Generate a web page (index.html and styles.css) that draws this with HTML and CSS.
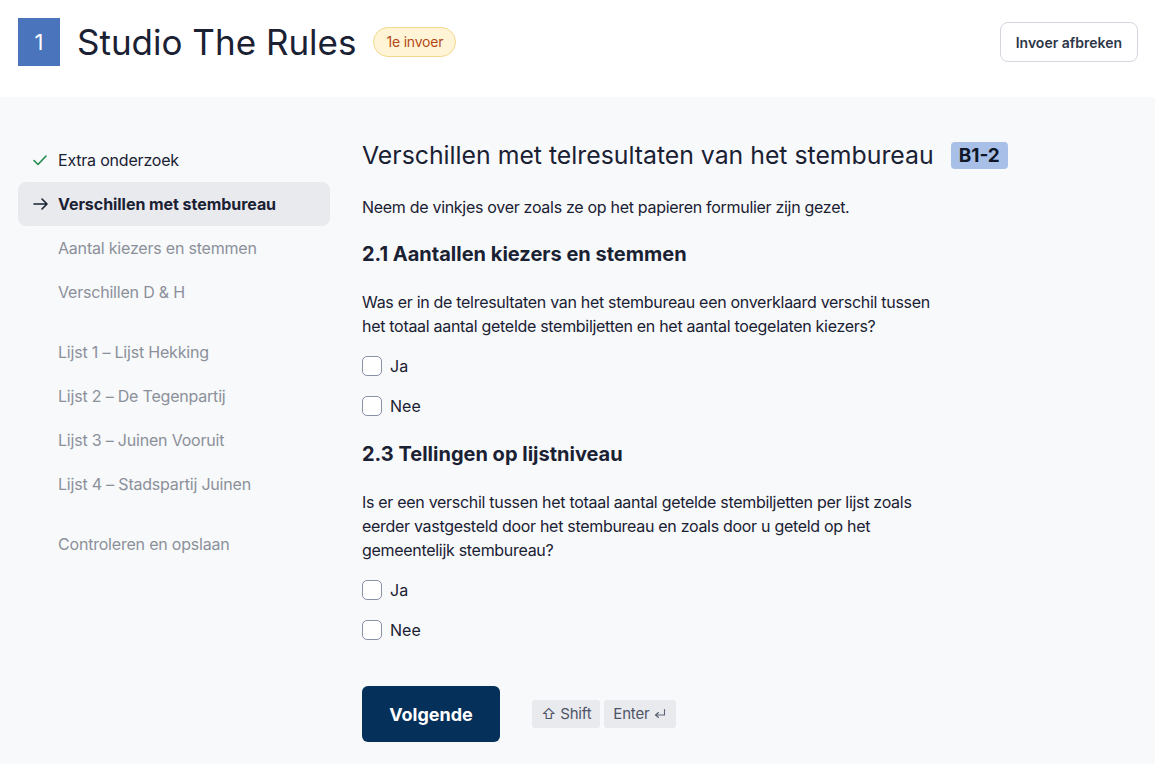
FILE: index.html
```html
<!DOCTYPE html>
<html lang="nl">
<head>
<meta charset="utf-8">
<title>Studio The Rules</title>
<link rel="stylesheet" href="styles.css">
</head>
<body>
<header class="topbar">
  <div class="brand">
    <div class="logo">1</div>
    <h1 class="station">Studio The Rules</h1>
    <span class="badge-entry">1e invoer</span>
  </div>
  <button class="btn-outline">Invoer afbreken</button>
</header>
<div class="page">
  <nav class="sidebar">
    <ul class="nav-group">
      <li class="nav-item done">
        <span class="nav-icon"><svg width="16" height="16" viewBox="0 0 16 16"><path d="M2 8.5 L6 12.5 L14 4" fill="none" stroke="#1f8a4c" stroke-width="1.6" stroke-linecap="round" stroke-linejoin="round"/></svg></span>
        <span>Extra onderzoek</span>
      </li>
      <li class="nav-item active">
        <span class="nav-icon"><svg width="18" height="16" viewBox="0 0 18 16"><path d="M2 8 H15 M10 3 L15 8 L10 13" fill="none" stroke="#1a2133" stroke-width="1.6" stroke-linecap="round" stroke-linejoin="round"/></svg></span>
        <span>Verschillen met stembureau</span>
      </li>
      <li class="nav-item muted"><span class="nav-icon"></span><span>Aantal kiezers en stemmen</span></li>
      <li class="nav-item muted"><span class="nav-icon"></span><span>Verschillen D &amp; H</span></li>
    </ul>
    <ul class="nav-group">
      <li class="nav-item muted"><span class="nav-icon"></span><span>Lijst 1 – Lijst Hekking</span></li>
      <li class="nav-item muted"><span class="nav-icon"></span><span>Lijst 2 – De Tegenpartij</span></li>
      <li class="nav-item muted"><span class="nav-icon"></span><span>Lijst 3 – Juinen Vooruit</span></li>
      <li class="nav-item muted"><span class="nav-icon"></span><span>Lijst 4 – Stadspartij Juinen</span></li>
    </ul>
    <ul class="nav-group">
      <li class="nav-item muted"><span class="nav-icon"></span><span>Controleren en opslaan</span></li>
    </ul>
  </nav>
  <main class="content">
    <div class="title-row">
      <h2 class="form-title">Verschillen met telresultaten van het stembureau</h2>
      <span class="badge-code">B1-2</span>
    </div>
    <p class="intro">Neem de vinkjes over zoals ze op het papieren formulier zijn gezet.</p>

    <section class="question">
      <h3 class="q-title">2.1 Aantallen kiezers en stemmen</h3>
      <p class="q-text">Was er in de telresultaten van het stembureau een onverklaard verschil tussen het totaal aantal getelde stembiljetten en het aantal toegelaten kiezers?</p>
      <label class="check"><span class="box"></span>Ja</label>
      <label class="check"><span class="box"></span>Nee</label>
    </section>

    <section class="question">
      <h3 class="q-title">2.3 Tellingen op lijstniveau</h3>
      <p class="q-text">Is er een verschil tussen het totaal aantal getelde stembiljetten per lijst zoals eerder vastgesteld door het stembureau en zoals door u geteld op het gemeentelijk stembureau?</p>
      <label class="check"><span class="box"></span>Ja</label>
      <label class="check"><span class="box"></span>Nee</label>
    </section>

    <div class="actions">
      <button class="btn-primary">Volgende</button>
      <div class="shortcut">
        <kbd class="key">⇧ Shift</kbd>
        <kbd class="key">Enter <svg width="14" height="14" viewBox="0 0 14 14"><path d="M11.5 2.5 V8 H3 M5.5 5.5 L2.5 8 L5.5 10.5" fill="none" stroke="#5a6275" stroke-width="1.1" stroke-linecap="round" stroke-linejoin="round"/></svg></kbd>
      </div>
    </div>
  </main>
</div>
</body>
</html>
```

FILE: styles.css
```css
* { box-sizing: border-box; }
html, body { margin: 0; padding: 0; }
body {
  font-family: Inter, "Noto Sans", "Liberation Sans", sans-serif;
  color: #1a2133;
  background: #f8f9fb;
  font-size: 16px;
}
.topbar {
  background: #ffffff;
  height: 97px;
  display: flex;
  align-items: flex-start;
  justify-content: space-between;
  padding: 18px 17px 0 18px;
}
.brand {
  display: flex;
  align-items: center;
}
.logo {
  width: 42px;
  height: 48px;
  background: #4a74bc;
  color: #fff;
  font-size: 22px;
  display: flex;
  align-items: center;
  justify-content: center;
  margin-right: 17px;
}
.station {
  margin: 0 17px 0 0;
  font-weight: 400;
  font-size: 35px;
  color: #1a2133;
}
.badge-entry {
  background: #fff4d6;
  border: 1px solid #f3d88c;
  color: #b34a16;
  font-size: 14px;
  letter-spacing: -0.2px;
  padding: 0 12px;
  height: 30px;
  line-height: 28px;
  border-radius: 15px;
}
.btn-outline {
  margin-top: 4px;
  height: 40px;
  padding: 0 15px;
  font-family: inherit;
  font-size: 14px;
  font-weight: 600;
  color: #2d3648;
  background: #fff;
  border: 1px solid #d3d6dd;
  border-radius: 8px;
}
.page {
  display: flex;
  padding: 41px 0 0 18px;
}
.sidebar {
  width: 312px;
  flex-shrink: 0;
  margin-right: 32px;
}
.nav-group {
  list-style: none;
  margin: 0 0 16px 0;
  padding: 0;
}
.nav-item {
  height: 44px;
  display: flex;
  align-items: center;
  padding-left: 14px;
  font-size: 16px;
  letter-spacing: -0.2px;
  color: #1a2133;
  border-radius: 8px;
}
.nav-icon {
  width: 26px;
  display: inline-flex;
  align-items: center;
}
.nav-item.active {
  background: #e9eaee;
  font-weight: 700;
  letter-spacing: -0.05px;
}
.nav-item.muted {
  color: #8b909a;
}
.content {
  flex: 1;
}
.title-row {
  display: flex;
  align-items: center;
  gap: 17px;
  height: 34px;
}
.form-title {
  margin: 0;
  font-size: 24.8px;
  font-weight: 400;
}
.badge-code {
  background: #a8c0e8;
  color: #101828;
  font-weight: 700;
  font-size: 19px;
  padding: 0 8px;
  height: 27px;
  line-height: 27px;
  border-radius: 4px;
}
.intro {
  margin: 23px 0 21px 0;
  font-size: 16px;
  line-height: 24px;
  letter-spacing: -0.3px;
}
.question { margin-top: 14px; }
.q-title {
  margin: 0;
  font-size: 20px;
  font-weight: 700;
  line-height: 28px;
}
.q-text {
  margin: 22px 0 8px 0;
  max-width: 585px;
  font-size: 16px;
  line-height: 24px;
  letter-spacing: -0.3px;
}
.check {
  display: flex;
  align-items: center;
  gap: 8px;
  height: 40px;
  font-size: 16px;
}
.box {
  width: 20px;
  height: 20px;
  border: 1.5px solid #8792a6;
  border-radius: 5px;
  background: #fff;
}
.actions {
  display: flex;
  align-items: center;
  gap: 32px;
  margin-top: 36px;
}
.btn-primary {
  width: 138px;
  height: 56px;
  background: #04305a;
  color: #fff;
  border: none;
  border-radius: 6px;
  font-family: inherit;
  font-size: 18px;
  font-weight: 700;
}
.shortcut { display: flex; gap: 4px; }
.key {
  font-family: inherit;
  background: #e9eaee;
  color: #4d5567;
  font-size: 15px;
  letter-spacing: -0.2px;
  height: 28px;
  line-height: 28px;
  padding: 0 9px;
  border-radius: 3px;
  display: inline-flex;
  align-items: center;
  gap: 4px;
}
```
